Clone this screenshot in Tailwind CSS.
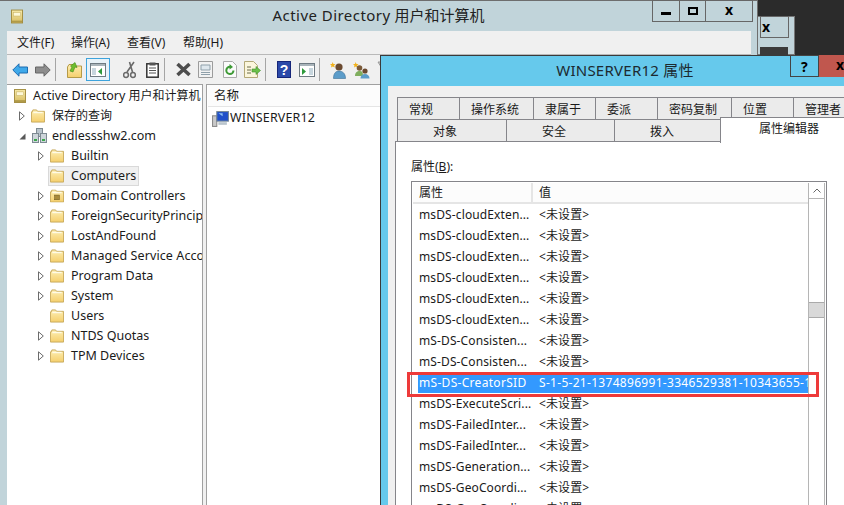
<!DOCTYPE html>
<html lang="en">
<head>
    <meta charset="UTF-8">
    <title>Active Directory 用户和计算机</title>
    <script src="https://cdn.jsdelivr.net/npm/@tailwindcss/browser@4"></script>
</head>
<body class="bg-[#2b2b2b]">
    <!-- shared icons -->
    <svg class="absolute w-0 h-0">
        <defs>
            <linearGradient id="folderFill" x1="0" y1="0" x2="0" y2="1"><stop offset="0" stop-color="#fdeeb4"/><stop offset="1" stop-color="#f5cf6c"/></linearGradient>
            <linearGradient id="adFill" x1="0" y1="0" x2="0" y2="1"><stop offset="0" stop-color="#f6e9a8"/><stop offset="1" stop-color="#d8bd62"/></linearGradient>
        </defs>
        <symbol id="folder" viewBox="0 0 15 14">
            <path d="M.5 2.500V13.500H14.500V2H7L6 .5H2L1.500 2.500Z" fill="url(#folderFill)" stroke="#c7a95a"/>
            <path d="M2.500 2.500H12.500V4H2.500Z" fill="#fffbe6"/>
        </symbol>
        <symbol id="closed" viewBox="0 0 6 10"><path d="M.5.8 5.300 5 .5 9.200Z" fill="#fff" stroke="#6b6b6b"/></symbol>
        <symbol id="adbook" viewBox="0 0 13 15">
            <rect x=".5" y=".5" width="12" height="14" fill="url(#adFill)" stroke="#a08a3c"/>
            <rect x="2.500" y="3" width="8" height="4" fill="#fdf8d8" stroke="#c8b262" stroke-width=".6"/>
            <rect x="1" y="12" width="11" height="2" fill="#b09a48"/>
        </symbol>
    </svg>

    <div class="relative w-[844px] h-[505px] overflow-hidden bg-[#2b2b2b] font-['Noto_Sans','Noto_Sans_CJK_SC',sans-serif] text-[12px] text-[#1a1a1a]">

        <!-- window behind -->
        <div class="absolute left-[740px] top-[16px] w-[55px] h-[39px] bg-[#c1d4da] border border-[#777]">
            <div class="absolute left-[19px] top-[-1px] w-[29px] h-[22px] border border-[#666] flex items-center pl-[1px] pb-[2px] font-bold text-[14px] text-black">x</div>
            <div class="absolute left-[19px] top-[30px] w-[28px] h-[8px] bg-[#3a3a3a]"></div>
        </div>

        <!-- main MMC window -->
        <div class="absolute left-0 top-0 w-[758px] h-[505px] bg-[#c1d4da] border-t border-r border-[#6e6e6e] flex flex-col">
            <div class="relative h-[30px] shrink-0 flex items-center justify-center pb-[1px]">
                <svg class="absolute left-[11px] top-[8px] w-[12px] h-[15px]"><use href="#adbook"/></svg>
                <span class="text-[15px] text-[#222]"><span class="tracking-[0.45px]">Active Directory</span> 用户和计算机</span>
                <div class="absolute left-[652px] top-[-1px] h-[22px] flex border border-[#666] text-black">
                    <div class="w-[27px] flex items-center justify-center border-r border-[#666]"><div class="w-[10px] h-[3px] mt-[4px] bg-black"></div></div>
                    <div class="w-[26px] flex items-center justify-center border-r border-[#666]"><div class="w-[10px] h-[8px] border-2 border-black"></div></div>
                    <div class="w-[46px] flex items-center justify-center font-bold text-[14px] leading-none pb-[3px]">x</div>
                </div>
            </div>

            <div class="mx-[7px] flex-1 flex flex-col bg-[#f0f0f0] min-h-0 mr-[6px]">
                <!-- menu -->
                <div class="h-[24px] shrink-0 flex items-center border-b border-[#b9b9b9] text-[12px] pt-[1px]">
                    <span class="ml-[10px] w-[54px]">文件(F)</span>
                    <span class="w-[56px]">操作(A)</span>
                    <span class="w-[56px]">查看(V)</span>
                    <span>帮助(H)</span>
                </div>

                <!-- toolbar -->
                <div class="h-[29px] shrink-0 flex items-center">
                    <svg class="ml-[5px] w-[16px] h-[14px]" viewBox="0 0 16 14"><path d="M.8 7 7 .8V4H15.500V10H7V13.200Z" fill="#3fa9ea" stroke="#1f6cb0"/></svg>
                    <svg class="ml-[7px] w-[16px] h-[14px]" viewBox="0 0 16 14"><path d="M15.200 7 9 .8V4H.5V10H9V13.200Z" fill="#8d8d8d" stroke="#666"/></svg>
                    <div class="ml-[4px] w-[1px] h-[23px] bg-[#a5a5a5]"></div>
                    <svg class="ml-[11px] w-[15px] h-[17px]" viewBox="0 0 15 17"><path d="M.5 6V16.500H14.500V5H7L6 3.500H2Z" fill="url(#folderFill)" stroke="#b59a48"/><path d="M3 10 5 6 3.500 5 8 1.500 10 6.500 8 6 6 11Z" fill="#6fbe2e" stroke="#3f8a15" stroke-width=".6"/></svg>
                    <div class="ml-[4px] w-[24px] h-[23px] border border-[#3ea3dc] bg-[#e8f2f8] flex items-center justify-center">
                        <svg class="w-[16px] h-[14px]" viewBox="0 0 16 14"><rect x=".5" y=".5" width="15" height="13" fill="#fff" stroke="#6e7a82"/><path d="M1 1H15V3H1Z" fill="#a9b4ba"/><path d="M2 5H6V12H2Z" fill="#c7d6de"/><path d="M12 5V12L8 8.500Z" fill="#2f9a3c"/></svg>
                    </div>
                    <svg class="ml-[13px] w-[13px] h-[18px]" viewBox="0 0 13 18" fill="none" stroke="#6a6a6a"><path d="M11 1 4 11M6.500 1l3 10" stroke-width="1.600"/><circle cx="3" cy="14" r="2.400" stroke-width="1.500"/><circle cx="10" cy="14" r="2.400" stroke-width="1.500"/></svg>
                    <svg class="ml-[10px] w-[13px] h-[16px]" viewBox="0 0 13 16"><rect x=".8" y="1.800" width="11.400" height="13.400" fill="#fff" stroke="#333" stroke-width="1.500"/><rect x="3.500" y=".5" width="6" height="3" fill="#555"/><path d="M3 6H10M3 8.500H10M3 11H10" stroke="#555"/></svg>
                    <div class="ml-[5px] w-[1px] h-[23px] bg-[#a5a5a5]"></div>
                    <svg class="ml-[10px] w-[17px] h-[15px]" viewBox="0 0 17 15"><path d="M2.500 2 14.500 13M14.500 2 2.500 13" stroke="#4d4d4d" stroke-width="3.600"/></svg>
                    <svg class="ml-[6px] w-[15px] h-[17px]" viewBox="0 0 15 17"><path d="M.5.5H14.500V16.500H.5Z" fill="#f2f2f2" stroke="#9c9c9c"/><path d="M3 4H12V9H3Z" fill="#dfe8ee" stroke="#8fa0aa"/><path d="M3 11.500H12M3 13.500H12" stroke="#8fa0aa"/></svg>
                    <svg class="ml-[10px] w-[14px] h-[17px]" viewBox="0 0 14 17"><path d="M.5.5H9.500L13.500 4.500V16.500H.5Z" fill="#fbfbfb" stroke="#aaa"/><path d="M10.500 9.500A3.600 3.600 0 1 1 7 5.800" fill="none" stroke="#3d9a35" stroke-width="2"/><path d="M6.500 3 10 6 6.500 8.500Z" fill="#3d9a35"/></svg>
                    <svg class="ml-[7px] w-[17px] h-[17px]" viewBox="0 0 17 17"><path d="M.5.5H9.500L13.500 4.500V16.500H.5Z" fill="#fbf6dc" stroke="#b3a877"/><path d="M3 6H7M3 9H7M3 12H7" stroke="#6a6a4a"/><path d="M8 8H12V5.500L16.500 9.500 12 13.500V11H8Z" fill="#6cc04a" stroke="#3f8f2a" stroke-width=".6"/></svg>
                    <div class="ml-[4px] w-[1px] h-[23px] bg-[#a5a5a5]"></div>
                    <svg class="ml-[11px] w-[14px] h-[17px]" viewBox="0 0 14 17"><rect width="14" height="17" fill="#2b49a9"/><rect x=".5" y=".5" width="13" height="16" fill="none" stroke="#16267a"/><text x="7" y="13.500" text-anchor="middle" font-size="14" font-weight="700" fill="#fff" font-family="Liberation Sans">?</text></svg>
                    <svg class="ml-[8px] w-[16px] h-[14px]" viewBox="0 0 16 14"><rect x=".5" y=".5" width="15" height="13" fill="#fff" stroke="#6e7a82"/><path d="M1 1H15V3H1Z" fill="#a9b4ba"/><path d="M3 5V12L7 8.500Z" fill="#2f9a3c"/><path d="M10 5H14V12H10Z" fill="#c7d6de"/></svg>
                    <div class="ml-[4px] w-[1px] h-[23px] bg-[#a5a5a5]"></div>
                    <svg class="ml-[10px] w-[17px] h-[18px]" viewBox="0 0 17 18"><path d="M2.500 1 3.500 3 5.500 3 4 4.500 5 6.500 2.800 5.500 1 6.500 1.500 4.500 0 3 2 3Z" fill="#f2b21c"/><circle cx="9" cy="6" r="3.600" fill="#6b4a30"/><path d="M3.500 17.500C3.500 12 6 10 9 10S15.500 12 15.500 17.500Z" fill="#5b9cc9" stroke="#3a6f96" stroke-width=".6"/></svg>
                    <svg class="ml-[6px] w-[17px] h-[18px]" viewBox="0 0 17 18"><path d="M2.500 1 3.500 3 5.500 3 4 4.500 5 6.500 2.800 5.500 1 6.500 1.500 4.500 0 3 2 3Z" fill="#f2b21c"/><circle cx="6.500" cy="7" r="2.800" fill="#7b5a38"/><path d="M2 15C2 11.500 4 10 6.500 10S10 11 10 15Z" fill="#7fae5e"/><circle cx="12" cy="10" r="2.600" fill="#6b4a30"/><path d="M7.500 17.500C7.500 14.500 9.500 13 12 13S16.500 14.500 16.500 17.500Z" fill="#5b9cc9"/></svg>
                    <svg class="ml-[7px] w-[14px] h-[18px]" viewBox="0 0 14 18"><path d="M1 1H9L6.500 5V15L3.500 17V5Z" fill="#c9c9c9" stroke="#9a9a9a"/></svg>
                </div>

                <!-- panes -->
                <div class="flex-1 flex min-h-0">
                    <!-- tree -->
                    <div class="w-[196px] shrink-0 bg-white border-t border-r border-[#a0a0a0] overflow-hidden whitespace-nowrap pt-[1px] text-[12.500px]">
                        <div class="h-5 flex items-center whitespace-pre"><svg class="ml-[7px] mr-[7px] w-[12px] h-[14px] shrink-0"><use href="#adbook"/></svg>Active Directory <span class="text-[12px]">用户和计算机</span></div>
                        <div class="h-5 flex items-center text-[12px]"><svg class="ml-[12px] w-[6px] h-[10px] shrink-0"><use href="#closed"/></svg><svg class="ml-[6px] mr-[7px] w-[14px] h-[14px] shrink-0"><use href="#folder"/></svg>保存的查询</div>
                        <div class="h-5 flex items-center">
                            <svg class="ml-[12px] w-[7px] h-[7px] shrink-0" viewBox="0 0 7 7"><path d="M6.500.5V6.500H.5Z" fill="#595959"/></svg>
                            <svg class="ml-[6px] mr-[5px] w-[15px] h-[16px] shrink-0" viewBox="0 0 15 16"><rect x="4.500" y=".5" width="6" height="8" fill="#b9c4cc" stroke="#7d8a92"/><rect x=".5" y="5.500" width="6" height="9" fill="#cdd5da" stroke="#7d8a92"/><rect x="8.500" y="5.500" width="6" height="9" fill="#cdd5da" stroke="#7d8a92"/><path d="M2 12h3M10 12h3" stroke="#3aa84a" stroke-width="2"/></svg>endlessshw2.com
                        </div>
                        <div class="h-5 flex items-center"><svg class="ml-[31px] w-[6px] h-[10px] shrink-0"><use href="#closed"/></svg><svg class="ml-[6px] mr-[7px] w-[14px] h-[14px] shrink-0"><use href="#folder"/></svg>Builtin</div>
                        <div class="h-5 flex items-center"><div class="ml-[41px] h-[20px] w-[91px] flex items-center bg-[#f0f0f0] border border-[#d9d9d9]"><svg class="ml-[1px] mr-[7px] w-[14px] h-[14px] shrink-0"><use href="#folder"/></svg>Computers</div></div>
                        <div class="h-5 flex items-center"><svg class="ml-[31px] w-[6px] h-[10px] shrink-0"><use href="#closed"/></svg><svg class="ml-[6px] mr-[7px] w-[14px] h-[14px] shrink-0" viewBox="0 0 15 14"><use href="#folder"/><rect x="5" y="6" width="5" height="5" fill="#a88a3c" stroke="#6e5a20" stroke-width=".6"/></svg>Domain Controllers</div>
                        <div class="h-5 flex items-center"><svg class="ml-[31px] w-[6px] h-[10px] shrink-0"><use href="#closed"/></svg><svg class="ml-[6px] mr-[7px] w-[14px] h-[14px] shrink-0"><use href="#folder"/></svg>ForeignSecurityPrincipals</div>
                        <div class="h-5 flex items-center"><svg class="ml-[31px] w-[6px] h-[10px] shrink-0"><use href="#closed"/></svg><svg class="ml-[6px] mr-[7px] w-[14px] h-[14px] shrink-0"><use href="#folder"/></svg>LostAndFound</div>
                        <div class="h-5 flex items-center tracking-[0.1px]"><svg class="ml-[31px] w-[6px] h-[10px] shrink-0"><use href="#closed"/></svg><svg class="ml-[6px] mr-[7px] w-[14px] h-[14px] shrink-0"><use href="#folder"/></svg>Managed Service Accounts</div>
                        <div class="h-5 flex items-center"><svg class="ml-[31px] w-[6px] h-[10px] shrink-0"><use href="#closed"/></svg><svg class="ml-[6px] mr-[7px] w-[14px] h-[14px] shrink-0"><use href="#folder"/></svg>Program Data</div>
                        <div class="h-5 flex items-center"><svg class="ml-[31px] w-[6px] h-[10px] shrink-0"><use href="#closed"/></svg><svg class="ml-[6px] mr-[7px] w-[14px] h-[14px] shrink-0"><use href="#folder"/></svg>System</div>
                        <div class="h-5 flex items-center"><svg class="ml-[43px] mr-[7px] w-[14px] h-[14px] shrink-0"><use href="#folder"/></svg>Users</div>
                        <div class="h-5 flex items-center"><svg class="ml-[31px] w-[6px] h-[10px] shrink-0"><use href="#closed"/></svg><svg class="ml-[6px] mr-[7px] w-[14px] h-[14px] shrink-0"><use href="#folder"/></svg>NTDS Quotas</div>
                        <div class="h-5 flex items-center"><svg class="ml-[31px] w-[6px] h-[10px] shrink-0"><use href="#closed"/></svg><svg class="ml-[6px] mr-[7px] w-[14px] h-[14px] shrink-0"><use href="#folder"/></svg>TPM Devices</div>
                    </div>
                    <!-- list -->
                    <div class="ml-[3px] flex-1 bg-white border-t border-l border-[#a0a0a0] whitespace-nowrap">
                        <div class="h-[22px] ml-[1px] flex items-center pl-[6px] pt-[2px] border-b border-[#e5e5e5] bg-[#fcfcfc] text-[12.500px]">名称</div>
                        <div class="h-[21px] mt-[1px] flex items-center text-[12.500px] tracking-[0.15px]">
                            <svg class="ml-[5px] mr-[1px] w-[17px] h-[16px] shrink-0" viewBox="0 0 16 15"><rect x=".5" y="4.500" width="4" height="10" fill="#c9c9c9" stroke="#8a8a8a"/><rect x="4.500" y=".5" width="11" height="9" fill="#1f4fc9" stroke="#7a8a96"/><path d="M6 2h4v3z" fill="#8fc0f0"/><path d="M6 10.500H14V13H6Z" fill="#b9c4cc"/></svg>WINSERVER12
                        </div>
                    </div>
                </div>
            </div>
        </div>

        <!-- properties dialog -->
        <div class="absolute left-[380px] top-[55px] w-[490px] h-[460px] bg-[#66c9ec] border border-[#3a3a3a] flex flex-col">
            <div class="relative h-[30px] shrink-0 flex items-center justify-center pb-[1px] text-[15px] text-[#1c2a30] tracking-[0.25px]">
                WINSERVER12 属性
                <div class="absolute left-[409px] top-[-1px] h-[22px] flex">
                    <div class="w-[29px] border border-[#444] flex items-center justify-center font-bold text-[14px] text-black">?</div>
                    <div class="w-[40px] bg-[#c0574e] flex items-center font-bold text-[14px] text-black pl-[17px] pb-[3px]">x</div>
                </div>
            </div>
            <div class="ml-[7px] flex-1 bg-[#f0f0f0] pt-[11px] flex flex-col whitespace-nowrap">
                <!-- tabs -->
                <div class="ml-[9px] flex h-[22px]">
                    <div class="w-[62px] pl-[11px] pt-[1px] bg-[#ebebeb] border-t border-l border-[#85858a] leading-[21px]">常规</div>
                    <div class="w-[74px] pl-[11px] pt-[1px] bg-[#ebebeb] border-t border-l border-[#85858a] leading-[21px]">操作系统</div>
                    <div class="w-[62px] pl-[11px] pt-[1px] bg-[#ebebeb] border-t border-l border-[#85858a] leading-[21px]">隶属于</div>
                    <div class="w-[62px] pl-[11px] pt-[1px] bg-[#ebebeb] border-t border-l border-[#85858a] leading-[21px]">委派</div>
                    <div class="w-[74px] pl-[11px] pt-[1px] bg-[#ebebeb] border-t border-l border-[#85858a] leading-[21px]">密码复制</div>
                    <div class="w-[62px] pl-[11px] pt-[1px] bg-[#ebebeb] border-t border-l border-[#85858a] leading-[21px]">位置</div>
                    <div class="w-[62px] pl-[11px] pt-[1px] bg-[#ebebeb] border-t border-l border-[#85858a] leading-[21px]">管理者</div>
                </div>
                <div class="ml-[9px] flex h-[22px] relative z-10">
                    <div class="w-[109px] pl-[35px] pt-[1px] bg-[#ebebeb] border-t border-l border-[#85858a] leading-[21px]">对象</div>
                    <div class="w-[108px] pl-[35px] pt-[1px] bg-[#ebebeb] border-t border-l border-[#85858a] leading-[21px]">安全</div>
                    <div class="w-[106px] pl-[35px] pt-[1px] bg-[#ebebeb] border-t border-l border-[#85858a] leading-[21px]">拨入</div>
                    <div class="w-[140px] h-[26px] -mt-[2px] pl-[38px] pt-[1px] bg-white border-t border-l border-[#85858a] leading-[20px]">属性编辑器</div>
                </div>
                <!-- panel -->
                <div class="ml-[7px] flex-1 bg-white border-t border-l border-[#85858a] pl-[15px] pt-[18px]">
                    <div class="h-[14px] leading-[14px]">属性(<span class="underline">B</span>):</div>
                    <div class="mt-[7px] w-[416px] h-[340px] border border-[#85858a] p-[1px] flex">
                        <div class="flex-1 min-w-0">
                            <div class="h-[21px] flex items-center bg-[#fcfcfc] border-b-2 border-[#e5e5e5]">
                                <div class="w-[120px] h-full pl-[6px] pt-[1px] border-r-2 border-[#e5e5e5] flex items-center">属性</div>
                                <div class="pl-[6px] pt-[1px]">值</div>
                            </div>
                            <div class="ml-[5px] overflow-hidden tracking-[0.12px]">
                                <div class="h-[21px] flex items-center"><span class="w-[121px] pl-[1px]">msDS-cloudExten...</span><span>&lt;未设置&gt;</span></div>
                                <div class="h-[21px] flex items-center"><span class="w-[121px] pl-[1px]">msDS-cloudExten...</span><span>&lt;未设置&gt;</span></div>
                                <div class="h-[21px] flex items-center"><span class="w-[121px] pl-[1px]">msDS-cloudExten...</span><span>&lt;未设置&gt;</span></div>
                                <div class="h-[21px] flex items-center"><span class="w-[121px] pl-[1px]">msDS-cloudExten...</span><span>&lt;未设置&gt;</span></div>
                                <div class="h-[21px] flex items-center"><span class="w-[121px] pl-[1px]">msDS-cloudExten...</span><span>&lt;未设置&gt;</span></div>
                                <div class="h-[21px] flex items-center"><span class="w-[121px] pl-[1px]">msDS-cloudExten...</span><span>&lt;未设置&gt;</span></div>
                                <div class="h-[21px] flex items-center"><span class="w-[121px] pl-[1px]">mS-DS-Consisten...</span><span>&lt;未设置&gt;</span></div>
                                <div class="h-[21px] flex items-center"><span class="w-[121px] pl-[1px]">mS-DS-Consisten...</span><span>&lt;未设置&gt;</span></div>
                                <div class="h-[21px] flex items-center bg-[#3399ff] text-white overflow-hidden tracking-[0.3px] pt-[1px]"><span class="w-[121px] pl-[1px] shrink-0">mS-DS-CreatorSID</span><span>S-1-5-21-1374896991-3346529381-10343655-1</span></div>
                                <div class="h-[21px] flex items-center"><span class="w-[121px] pl-[1px]">msDS-ExecuteScri...</span><span>&lt;未设置&gt;</span></div>
                                <div class="h-[21px] flex items-center"><span class="w-[121px] pl-[1px]">msDS-FailedInter...</span><span>&lt;未设置&gt;</span></div>
                                <div class="h-[21px] flex items-center"><span class="w-[121px] pl-[1px]">msDS-FailedInter...</span><span>&lt;未设置&gt;</span></div>
                                <div class="h-[21px] flex items-center"><span class="w-[121px] pl-[1px]">msDS-Generation...</span><span>&lt;未设置&gt;</span></div>
                                <div class="h-[21px] flex items-center"><span class="w-[121px] pl-[1px]">msDS-GeoCoordi...</span><span>&lt;未设置&gt;</span></div>
                                <div class="h-[21px] flex items-center"><span class="w-[121px] pl-[1px]">msDS-GeoCoordi...</span><span>&lt;未设置&gt;</span></div>
                            </div>
                        </div>
                        <!-- scrollbar -->
                        <div class="w-[17px] shrink-0 border-l border-r border-[#b5b5b5] flex flex-col">
                            <div class="h-[16px] border-b border-[#b5b5b5] flex items-center justify-center">
                                <svg class="w-[8px] h-[5px]" viewBox="0 0 8 5"><path d="M.5 4.500 4 1 7.500 4.500" fill="none" stroke="#666"/></svg>
                            </div>
                            <div class="mt-[103px] h-[16px] bg-[#d9d9d9] border-t border-b border-[#aaa]"></div>
                        </div>
                    </div>
                </div>
            </div>
        </div>

        <!-- red annotation around the selected row -->
        <div class="absolute left-[407px] top-[372px] w-[412px] h-[25px] border-[3px] border-[#ee3a3a]"></div>
    </div>
</body>
</html>
